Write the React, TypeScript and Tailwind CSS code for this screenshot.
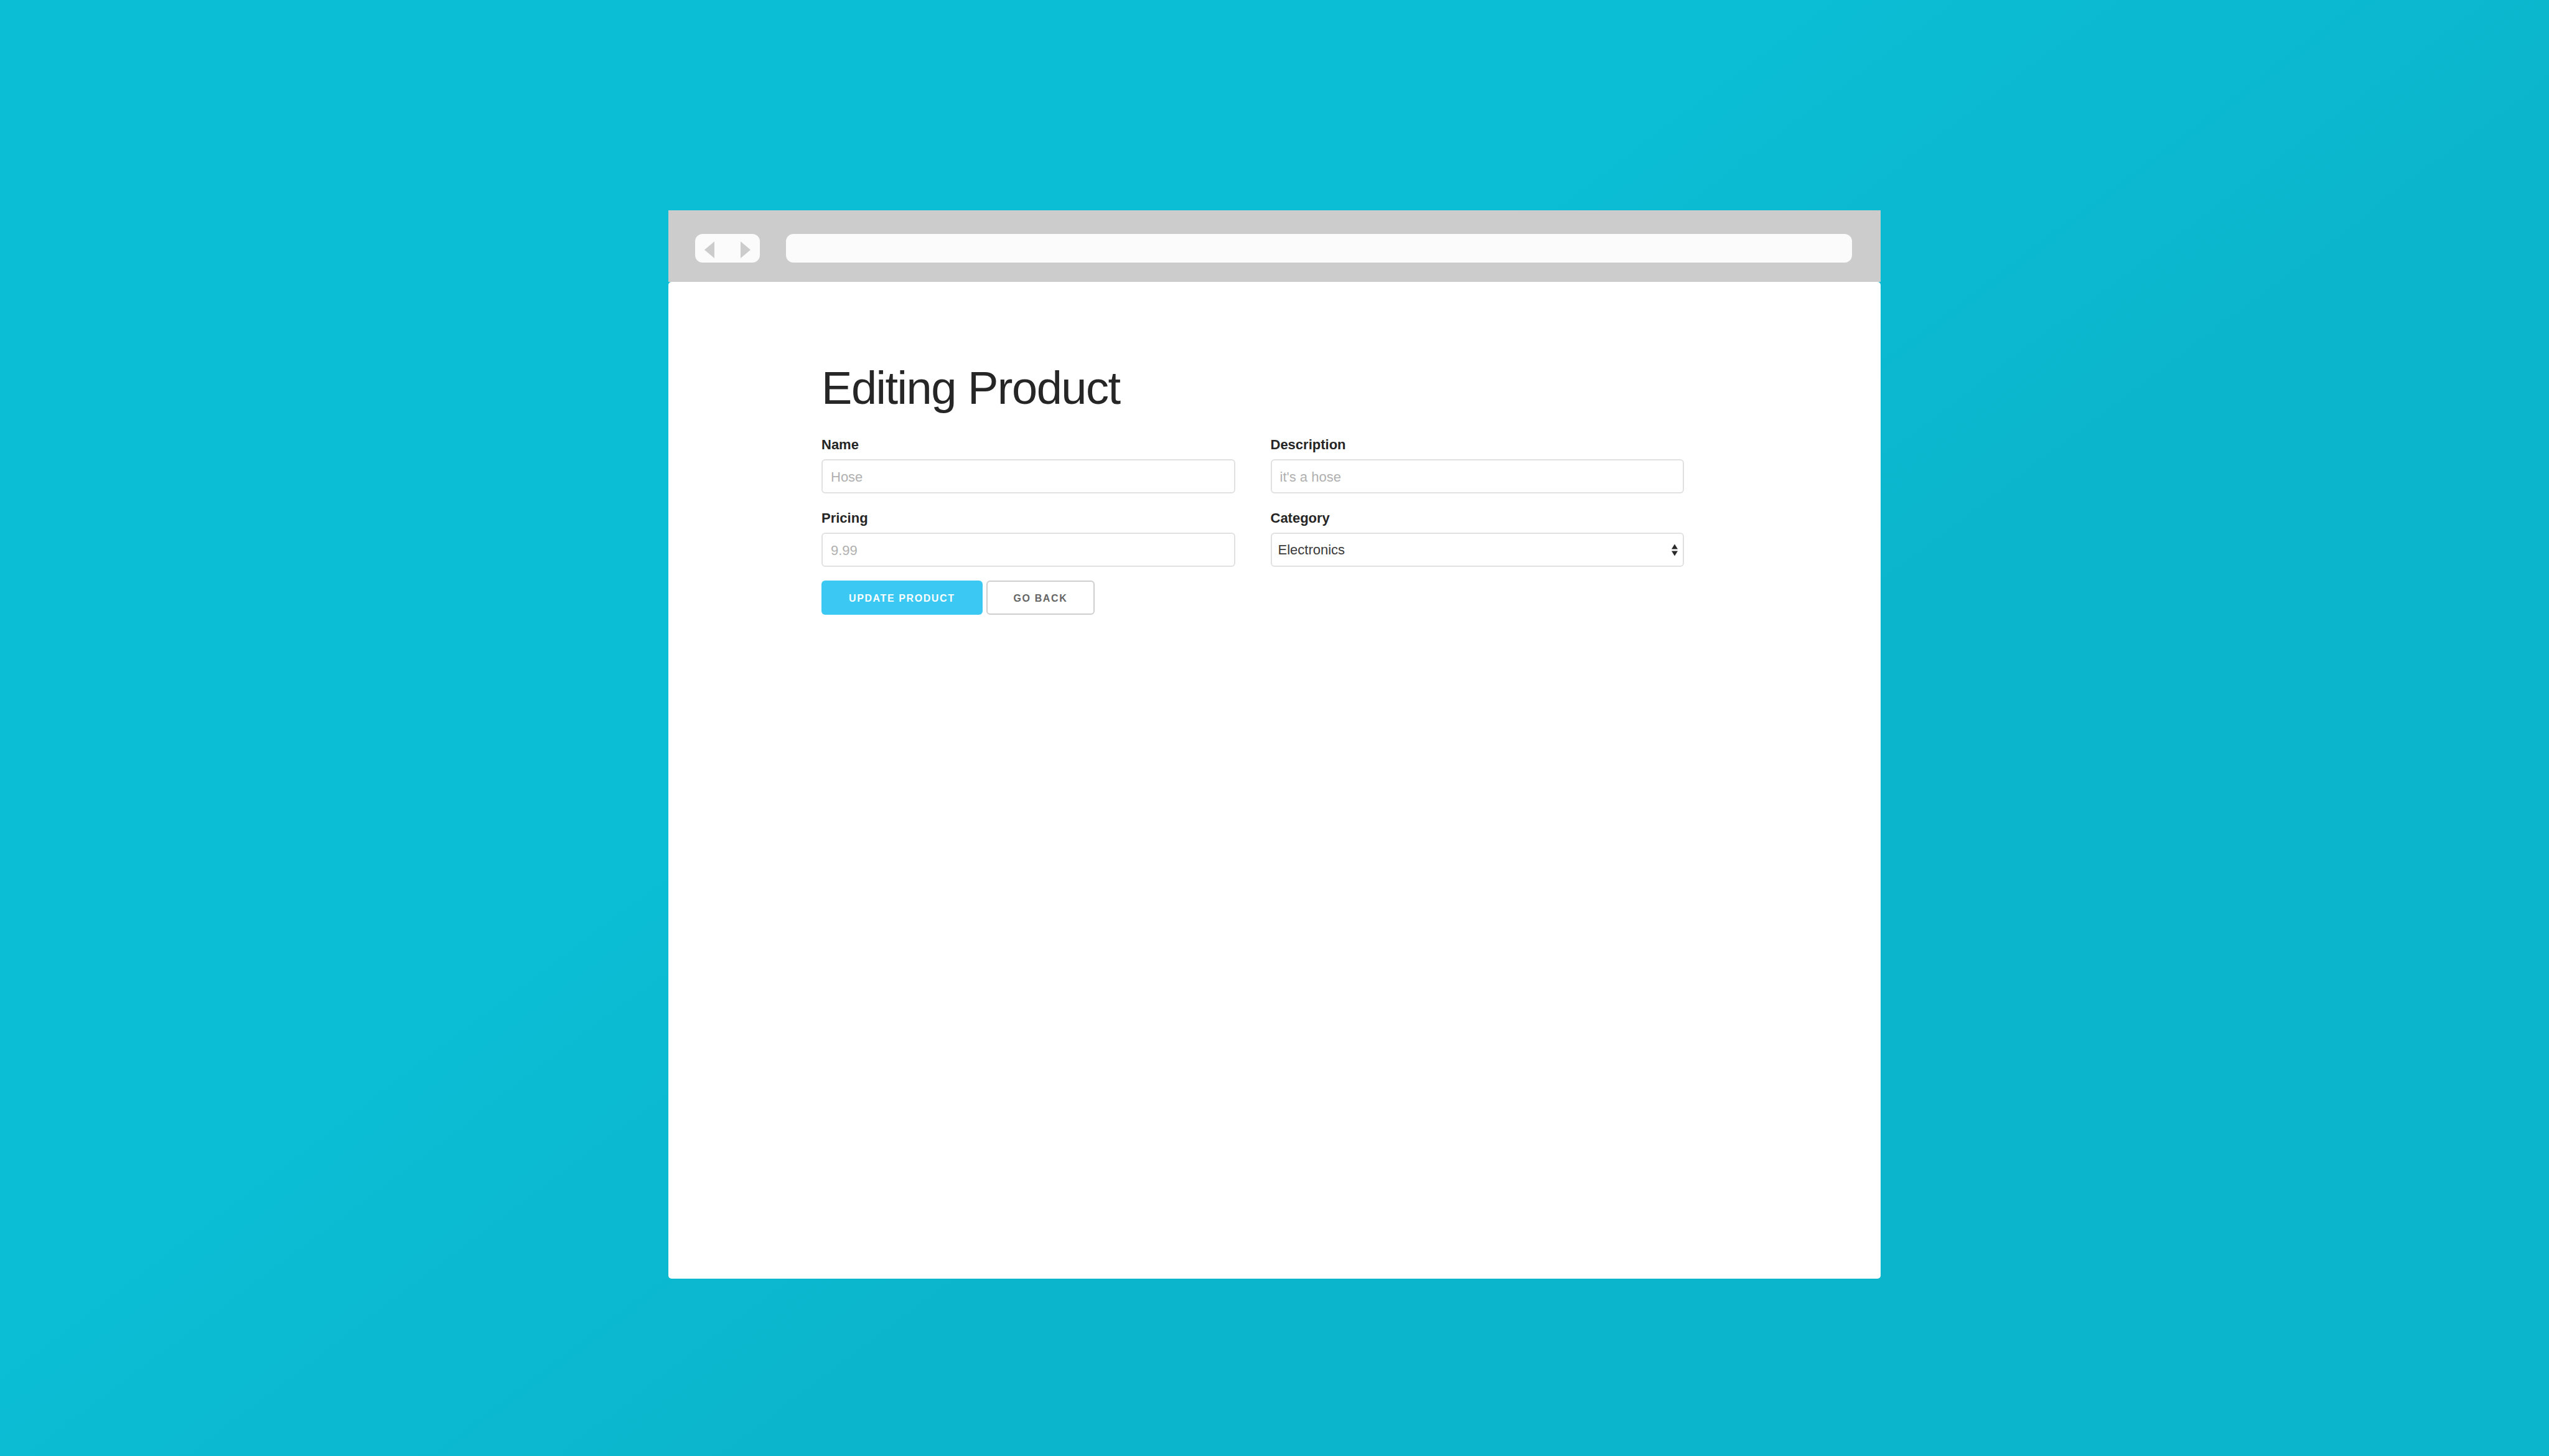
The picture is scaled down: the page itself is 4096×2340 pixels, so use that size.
import { useId, type ReactNode } from "react";

const controlClass =
  "h-[55px] w-full rounded-[6px] border-2 border-[#e1e1e1] bg-white text-[22px] leading-[32px] outline-none";

function Field({ id, label, children }: { id: string; label: string; children: ReactNode }) {
  return (
    <div className="flex flex-col gap-[6px]">
      <label htmlFor={id} className="text-[22px] leading-[34px] font-bold">
        {label}
      </label>
      {children}
    </div>
  );
}

function TextField({ label, placeholder }: { label: string; placeholder: string }) {
  const id = useId();
  return (
    <Field id={id} label={label}>
      <input
        id={id}
        type="text"
        placeholder={placeholder}
        className={`${controlClass} px-[13px] pt-[2px] placeholder:text-[#b0b0b0]`}
      />
    </Field>
  );
}

function SelectField({ label, options }: { label: string; options: string[] }) {
  const id = useId();
  return (
    <Field id={id} label={label}>
      <div className="relative">
        <select id={id} className={`${controlClass} appearance-none px-[10px] text-[#3a3a3a]`}>
          {options.map((option) => (
            <option key={option}>{option}</option>
          ))}
        </select>
        <svg
          viewBox="0 0 10 20"
          className="pointer-events-none absolute inset-y-0 right-[10px] my-auto h-5 w-[10px] fill-[#2a2a2a]"
          aria-hidden="true"
        >
          <path d="M5 0.5 L10 8.5 H0 Z M5 19.5 L0 11.5 H10 Z" />
        </svg>
      </div>
    </Field>
  );
}

function BrowserBar() {
  return (
    <header className="flex h-[115px] items-center gap-[42px] bg-[#ccc] pt-[7px] pr-[46px] pl-[43px]">
      <nav className="flex h-[46px] items-center gap-[42px] rounded-[12px] bg-[#fbfbfb] px-[15px]" aria-label="History">
        <button type="button" aria-label="Back">
          <svg viewBox="0 0 16 27" className="mt-1 h-[27px] w-4 fill-[#ccc]">
            <path d="M16 0 V27 L0 13.5 Z" />
          </svg>
        </button>
        <button type="button" aria-label="Forward">
          <svg viewBox="0 0 16 27" className="mt-1 h-[27px] w-4 fill-[#ccc]">
            <path d="M0 0 V27 L16 13.5 Z" />
          </svg>
        </button>
      </nav>
      <input
        type="text"
        aria-label="Address"
        className="h-[46px] min-w-0 flex-1 rounded-[12px] bg-[#fbfbfb] px-4 text-[22px] outline-none"
      />
    </header>
  );
}

export default function App() {
  return (
    <div className="flex min-h-screen flex-col bg-[linear-gradient(143deg,#0bbed6_37%,#0bb6cc_60%)] pt-[338px] pb-[285px] font-['Liberation_Sans',Arial,sans-serif] text-[#262626]">
      <div className="mx-auto flex w-full max-w-[1948px] flex-1 flex-col">
        <BrowserBar />
        <main className="flex-1 rounded-[5px] bg-white pt-[128px] pr-[316px] pl-[246px]">
          <h1 className="mb-[31px] text-[74px] leading-[86px] tracking-[-0.02em]">Editing Product</h1>
          <form onSubmit={(event) => event.preventDefault()}>
            <div className="grid grid-cols-2 gap-x-[57px] gap-y-[23px]">
              <TextField label="Name" placeholder="Hose" />
              <TextField label="Description" placeholder="it's a hose" />
              <TextField label="Pricing" placeholder="9.99" />
              <SelectField label="Category" options={["Electronics"]} />
            </div>
            <div className="mt-[22px] flex gap-[6px] text-[16px] font-bold tracking-widest">
              <button type="submit" className="h-[55px] rounded-[6px] bg-[#3bc9f3] px-[44px] pt-[2px] text-white uppercase">
                Update Product
              </button>
              <button
                type="button"
                className="h-[55px] rounded-[6px] border-2 border-[#cecece] bg-white px-[42px] pt-[2px] text-[#666] uppercase"
              >
                Go Back
              </button>
            </div>
          </form>
        </main>
      </div>
    </div>
  );
}
